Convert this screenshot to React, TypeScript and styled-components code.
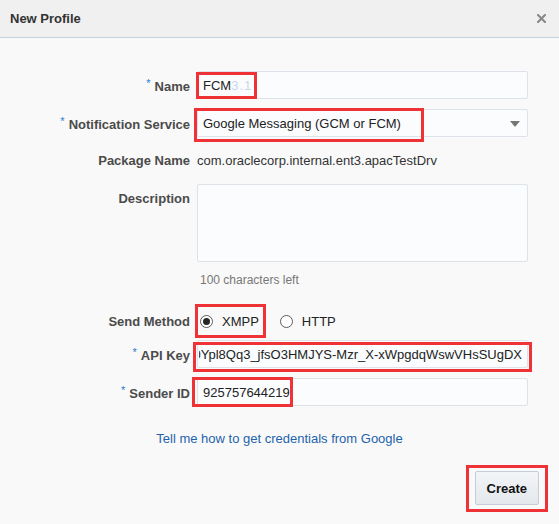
import React from 'react';
import styled, { createGlobalStyle } from 'styled-components';

const Global = createGlobalStyle`
  html, body { margin: 0; padding: 0; background: #f9f9f9; }
  body { font-family: "Liberation Sans", Arial, sans-serif; }
`;

const Dialog = styled.div`
  width: 559px;
  height: 524px;
  background: #f9f9f9;
  display: flex;
  flex-direction: column;
  overflow: hidden;
`;

const Header = styled.div`
  height: 37px;
  flex: none;
  background: #f0f0f0;
  border-bottom: 1px solid #c3d1dd;
  display: flex;
  align-items: center;
  justify-content: space-between;
  padding: 0 13px 0 10px;
`;

const Title = styled.h1`
  margin: 0;
  font-size: 13px;
  font-weight: bold;
  color: #333;
`;

const CloseButton = styled.button`
  border: 0;
  background: none;
  padding: 0;
  width: 9px;
  height: 9px;
  display: flex;
  cursor: pointer;
`;

const Body = styled.div`
  display: flex;
  flex-direction: column;
  padding: 33px 31px 0 0;
`;

const Row = styled.div<{ $mt?: number; $top?: boolean }>`
  display: grid;
  grid-template-columns: 190px 331px;
  column-gap: 7px;
  align-items: ${(p) => (p.$top ? 'start' : 'center')};
  min-height: 28px;
  margin-top: ${(p) => p.$mt ?? 0}px;
`;

const Label = styled.div<{ $top?: boolean }>`
  text-align: right;
  font-size: 13px;
  font-weight: bold;
  color: #4b4b4b;
  padding-top: ${(p) => (p.$top ? 7 : 0)}px;
  line-height: 15px;
`;

const Req = styled.span`
  color: #2b7bcb;
  font-size: 11px;
  font-weight: normal;
  vertical-align: 4px;
  margin-right: 4px;
`;

const Field = styled.div<{ $h?: number }>`
  position: relative;
  box-sizing: border-box;
  height: ${(p) => p.$h ?? 28}px;
  border: 1px solid #dde3e8;
  border-radius: 2px;
  background: #fbfcfe;
  padding: 0 5px;
  display: flex;
  align-items: center;
  font-size: 13px;
  color: #222;
  white-space: nowrap;
`;

const Clip = styled.div`
  overflow: hidden;
  display: flex;
  justify-content: flex-end;
  min-width: 0;
  flex: 1;
  margin-left: -4px;
`;

const ClipText = styled.span`
  flex: none;
`;

const Faint = styled.span`
  color: #c9d6ea;
  letter-spacing: 1px;
`;

const Arrow = styled.svg`
  position: absolute;
  right: 7px;
  top: 11px;
`;

const Value = styled.div`
  font-size: 13px;
  color: #333;
`;

const Hint = styled.div<{ $mt?: number }>`
  grid-column: 2;
  margin-top: ${(p) => p.$mt ?? 0}px;
  font-size: 12px;
  line-height: 17px;
  color: #777;
  padding-left: 3px;
`;

const RadioGroup = styled.div`
  position: relative;
  display: flex;
  align-items: center;
  height: 28px;
  padding-left: 3px;
`;

const Option = styled.label`
  display: inline-flex;
  align-items: center;
  gap: 9px;
  margin-right: 21px;
  font-size: 13px;
  color: #222;
`;

const RadioDot = styled.span<{ $checked?: boolean }>`
  box-sizing: border-box;
  width: 13px;
  height: 13px;
  border-radius: 50%;
  border: 1px solid #5c5c5c;
  background: #fff;
  display: flex;
  align-items: center;
  justify-content: center;
  &::after {
    content: '';
    width: 7px;
    height: 7px;
    border-radius: 50%;
    background: ${(p) => (p.$checked ? '#262626' : 'transparent')};
  }
`;

const LinkRow = styled.div`
  margin-top: 24px;
  padding-left: 31px;
  text-align: center;
  line-height: 16px;
`;

const Link = styled.a`
  font-size: 13px;
  color: #1d63ad;
  text-decoration: none;
`;

const Footer = styled.div`
  margin-top: 24px;
  margin-right: -11px;
  display: flex;
  justify-content: flex-end;
`;

const ButtonWrap = styled.div`
  position: relative;
  display: flex;
`;

const Button = styled.button`
  height: 34px;
  box-sizing: border-box;
  padding: 0 11px;
  border: 1px solid #c5cdd6;
  border-radius: 2px;
  background: linear-gradient(#f3f5f7, #e4e8ec);
  font-family: "Liberation Sans", Arial, sans-serif;
  font-size: 13px;
  font-weight: bold;
  color: #111;
`;

const Mark = styled.span<{ $l: number; $t: number; $w: number; $h: number }>`
  position: absolute;
  left: ${(p) => p.$l}px;
  top: ${(p) => p.$t}px;
  width: ${(p) => p.$w}px;
  height: ${(p) => p.$h}px;
  box-sizing: border-box;
  border: 3px solid #ee3236;
  pointer-events: none;
`;

export default function App() {
  return (
    <>
      <Global />
      <Dialog>
        <Header>
          <Title>New Profile</Title>
          <CloseButton aria-label="Close">
            <svg width="9" height="9" viewBox="0 0 9 9">
              <path d="M1 1L8 8M8 1L1 8" stroke="#8a8a8a" strokeWidth="2.2" strokeLinecap="square" />
            </svg>
          </CloseButton>
        </Header>
        <Body>
          <Row>
            <Label>
              <Req>*</Req>Name
            </Label>
            <Field>
              FCM<Faint>3.1</Faint>
              <Mark $l={-2} $t={0} $w={61} $h={27} />
            </Field>
          </Row>
          <Row $mt={10}>
            <Label>
              <Req>*</Req>Notification Service
            </Label>
            <Field>
              Google Messaging (GCM or FCM)
              <Arrow width="10" height="6" viewBox="0 0 10 6">
                <path d="M0 0H10L5 6Z" fill="#767676" />
              </Arrow>
              <Mark $l={-4} $t={-2} $w={230} $h={34} />
            </Field>
          </Row>
          <Row $mt={9}>
            <Label>Package Name</Label>
            <Value>com.oraclecorp.internal.ent3.apacTestDrv</Value>
          </Row>
          <Row $mt={10} $top>
            <Label $top>Description</Label>
            <Field $h={78} />
            <Hint $mt={10}>100 characters left</Hint>
          </Row>
          <Row $mt={18}>
            <Label>Send Method</Label>
            <RadioGroup>
              <Option>
                <RadioDot $checked />
                XMPP
              </Option>
              <Option>
                <RadioDot />
                HTTP
              </Option>
              <Mark $l={-2} $t={-3} $w={71} $h={34} />
            </RadioGroup>
          </Row>
          <Row $mt={5}>
            <Label>
              <Req>*</Req>API Key
            </Label>
            <Field>
              <Clip>
                <ClipText>0Ypl8Qq3_jfsO3HMJYS-Mzr_X-xWpgdqWswVHsSUgDX</ClipText>
              </Clip>
              <Mark $l={-5} $t={1} $w={339} $h={30} />
            </Field>
          </Row>
          <Row $mt={10}>
            <Label>
              <Req>*</Req>Sender ID
            </Label>
            <Field>
              925757644219
              <Mark $l={-6} $t={-2} $w={101} $h={30} />
            </Field>
          </Row>
          <LinkRow>
            <Link href="#">Tell me how to get credentials from Google</Link>
          </LinkRow>
          <Footer>
            <ButtonWrap>
              <Button>Create</Button>
              <Mark $l={-9} $t={-6} $w={82} $h={47} />
            </ButtonWrap>
          </Footer>
        </Body>
      </Dialog>
    </>
  );
}
